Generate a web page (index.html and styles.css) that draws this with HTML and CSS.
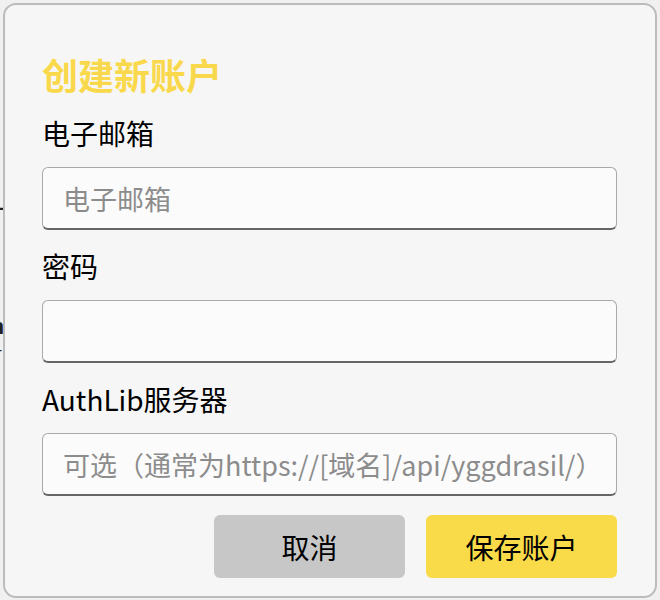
FILE: index.html
```html
<!DOCTYPE html>
<html lang="zh-CN">
<head>
<meta charset="utf-8">
<title>创建新账户</title>
<link rel="stylesheet" href="styles.css">
</head>
<body>
<div class="backdrop">
  <span class="bg-a">H</span>
  <span class="bg-b">n</span>
  <span class="bg-c">r</span>
</div>
<div class="dialog">
  <h1 class="title">创建新账户</h1>
  <label class="label first">电子邮箱</label>
  <input class="field" type="text" placeholder="电子邮箱">
  <label class="label">密码</label>
  <input class="field" type="password">
  <label class="label">AuthLib服务器</label>
  <input class="field" type="text" placeholder="可选（通常为https://[域名]/api/yggdrasil/）">
  <div class="actions">
    <button class="btn cancel">取消</button>
    <button class="btn save">保存账户</button>
  </div>
</div>
</body>
</html>
```
FILE: styles.css
```css
html, body {
  margin: 0;
  padding: 0;
  background: #f0f0f0;
  font-family: "Noto Sans CJK SC", "Noto Sans", sans-serif;
}
body {
  position: relative;
  width: 660px;
  height: 600px;
  overflow: hidden;
}
.backdrop {
  position: absolute;
  left: 0;
  top: 0;
  width: 10px;
  height: 600px;
}
.backdrop span {
  position: absolute;
  font-family: "Noto Sans", sans-serif;
  line-height: 1;
  color: #222;
}
.bg-a { left: -8px; top: 194px; font-size: 28px; color: #3a2a10; }
.bg-b { left: -10px; top: 314px; font-size: 22px; font-weight: bold; color: #0b1a40; }
.bg-c { left: -4px; top: 346px; font-size: 14px; }
.dialog {
  position: absolute;
  left: 3px;
  top: 3px;
  box-sizing: border-box;
  width: 654px;
  height: 595px;
  background: #f6f6f6;
  border: 2px solid #bcbcbc;
  border-radius: 13px;
  padding: 47px 38px 0 37px;
  display: flex;
  flex-direction: column;
}
.title {
  margin: 0;
  font-size: 36px;
  line-height: 44px;
  height: 44px;
  font-weight: bold;
  color: #f9d94b;
}
.label {
  display: block;
  font-size: 28px;
  line-height: 40px;
  height: 40px;
  color: #000;
  margin-top: 16px;
  margin-bottom: 14px;
}
.label.first {
  margin-top: 17px;
}
.field {
  box-sizing: border-box;
  width: 100%;
  height: 63px;
  margin: 0;
  padding: 0 0 0 20px;
  border: 1px solid #a9a9a9;
  border-bottom: 2px solid #666;
  border-radius: 6px;
  background: #fbfbfb;
  font-family: "Noto Sans CJK SC", "Noto Sans", sans-serif;
  font-size: 27px;
  color: #000;
  outline: none;
}
.field::placeholder {
  color: #8c8c8c;
}
.actions {
  display: flex;
  justify-content: flex-end;
  gap: 21px;
  margin-top: 19px;
}
.btn {
  width: 191px;
  height: 63px;
  border: none;
  border-radius: 6px;
  font-family: "Noto Sans CJK SC", "Noto Sans", sans-serif;
  font-size: 28px;
  color: #000;
  padding: 0;
}
.cancel { background: #c7c7c7; }
.save { background: #f9db4a; }
```
